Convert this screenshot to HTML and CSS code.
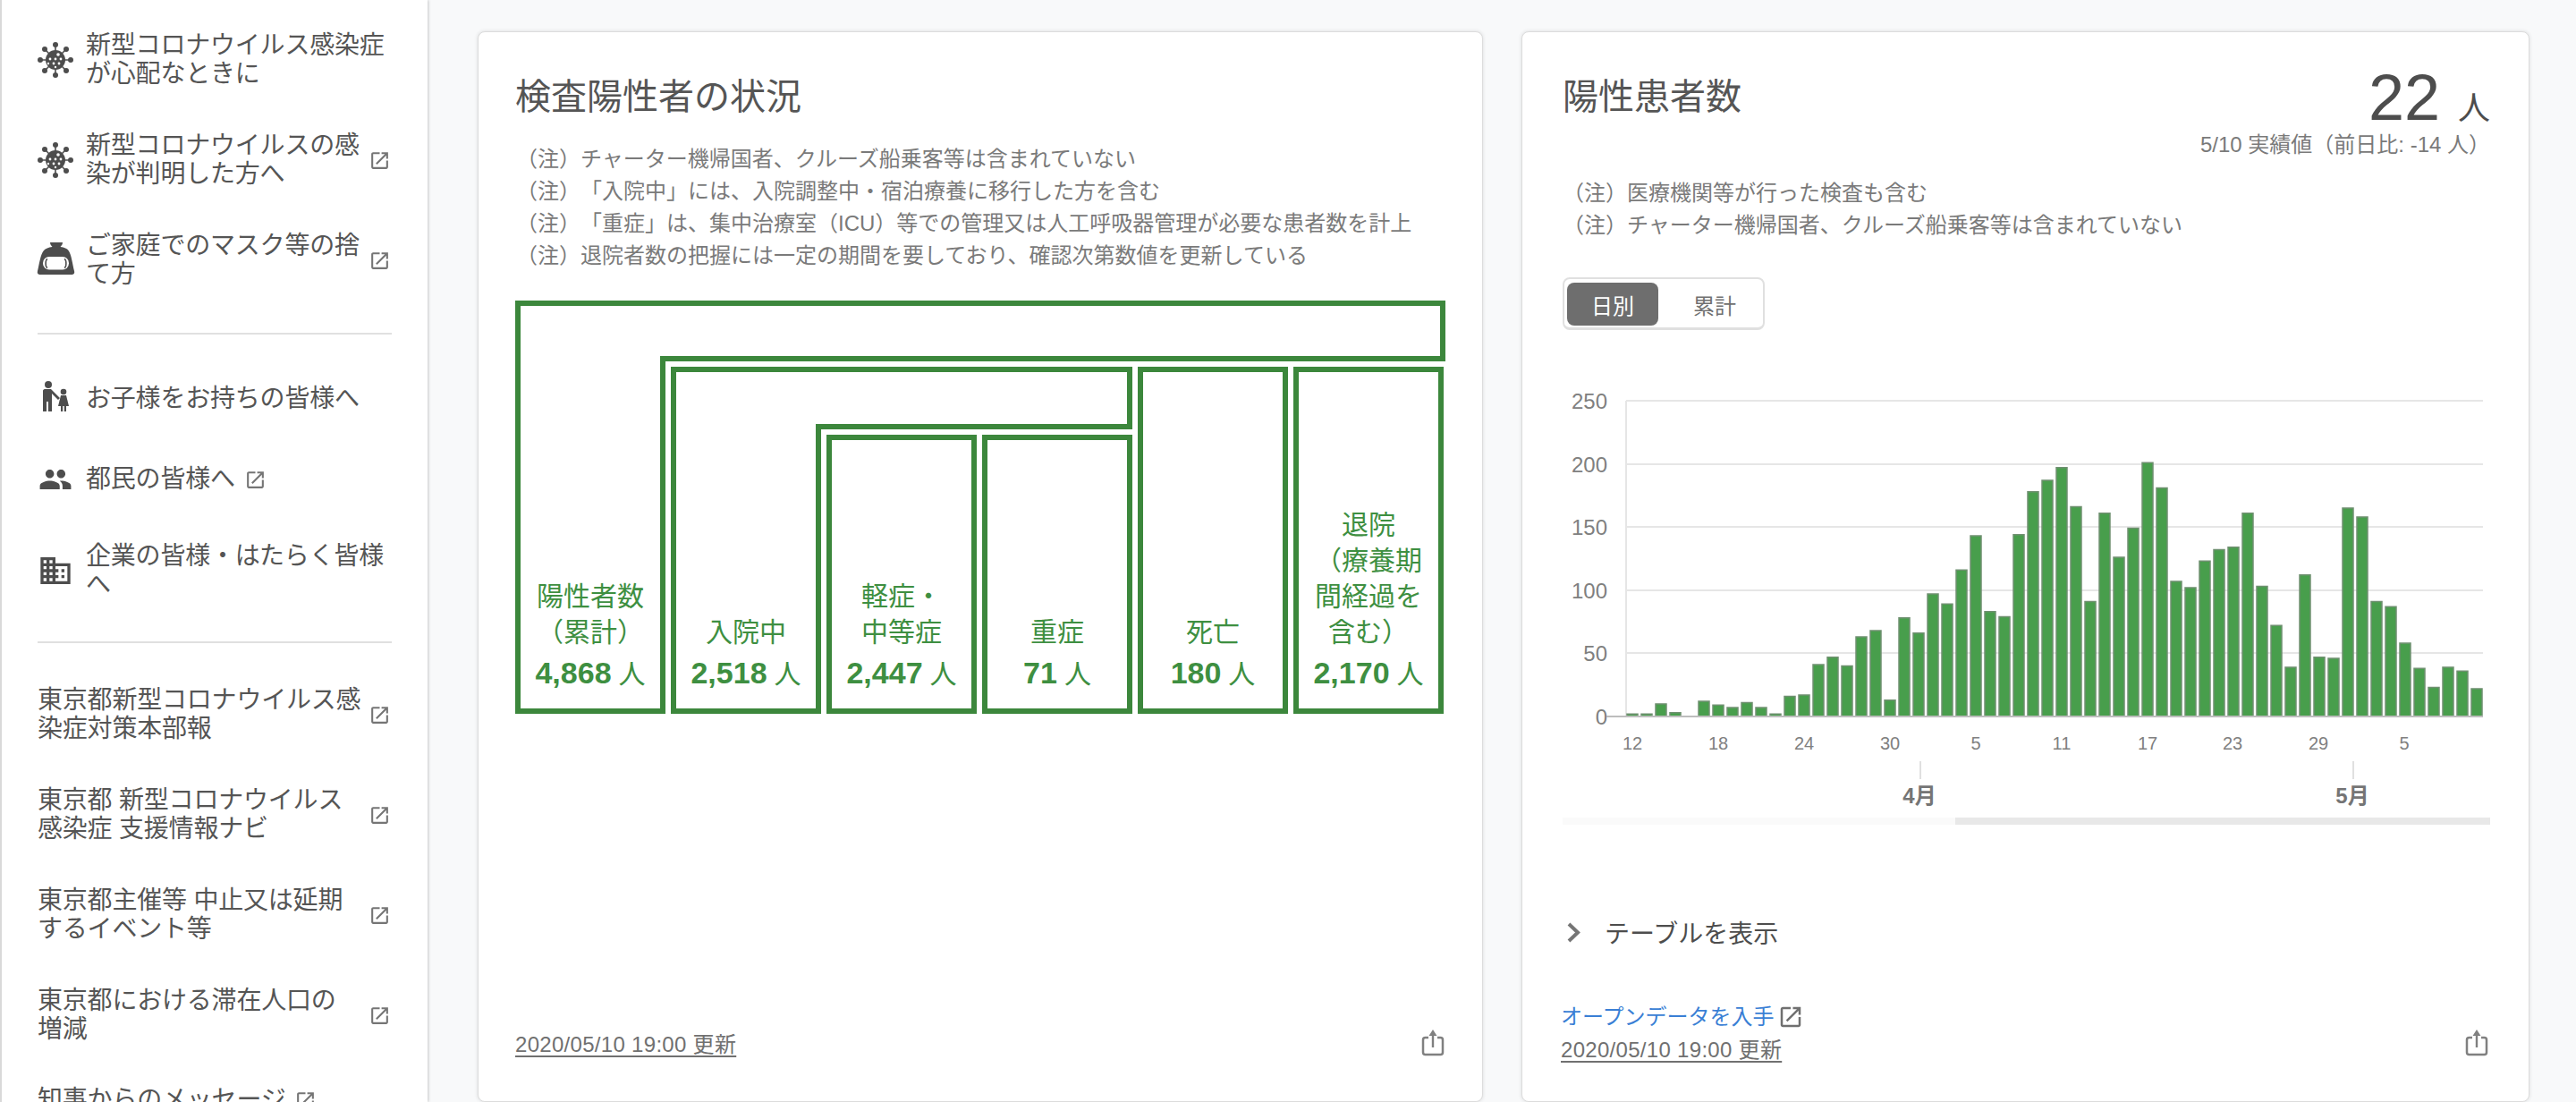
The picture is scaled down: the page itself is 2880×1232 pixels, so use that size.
FILE: index.html
```html
<!DOCTYPE html>
<html lang="ja">
<head>
    <meta charset="UTF-8">
    <title>東京都 新型コロナウイルス感染症 対策サイト</title>
    <link rel="stylesheet" href="styles.css">
</head>
<body>
    <svg class="icon-defs" width="0" height="0">
        <symbol id="icon-ext" viewBox="0 0 24 24">
            <path d="M19 19H5V5h7V3H5c-1.11 0-2 .9-2 2v14c0 1.1.89 2 2 2h14c1.1 0 2-.9 2-2v-7h-2v7zM14 3v2h3.59l-9.83 9.83 1.41 1.41L19 6.41V10h2V3h-7z"/>
        </symbol>
        <symbol id="icon-virus" viewBox="0 0 40 40">
            <path d="M20 3v34M3 20h34M8 8l24 24M32 8L8 32" fill="none" stroke="#4d4d4d" stroke-width="1.6"/>
            <circle cx="20" cy="20" r="11"/>
            <circle cx="20" cy="3" r="3"/><circle cx="20" cy="37" r="3"/>
            <circle cx="3" cy="20" r="3"/><circle cx="37" cy="20" r="3"/>
            <circle cx="8" cy="8" r="3"/><circle cx="32" cy="8" r="3"/>
            <circle cx="8" cy="32" r="3"/><circle cx="32" cy="32" r="3"/>
            <g fill="#fff">
                <circle cx="23" cy="14" r="1.8"/><circle cx="14" cy="19" r="1.4"/><circle cx="20" cy="19" r="1.4"/>
                <circle cx="26" cy="19" r="1.4"/><circle cx="12" cy="24" r="1.2"/><circle cx="18" cy="24" r="1.4"/>
                <circle cx="24" cy="24" r="1.4"/><circle cx="20" cy="28" r="1.2"/>
            </g>
        </symbol>
        <symbol id="icon-share" viewBox="0 0 26 30">
            <path d="M8 9H4.500Q2 9 2 11.500V25.500Q2 28 4.500 28H21.500Q24 28 24 25.500V11.500Q24 9 21.500 9H18" fill="none" stroke="#808080" stroke-width="2.500"/>
            <path d="M13 0l4.500 7H14.200V20H11.800V7H8.500z" fill="#808080"/>
        </symbol>
    </svg>

    <div class="layout">
        <nav class="sidebar">
            <a class="nav-item">
                <svg class="nav-icon"><use href="#icon-virus"/></svg>
                <span>新型コロナウイルス感染症<br>が心配なときに</span>
            </a>
            <a class="nav-item">
                <svg class="nav-icon"><use href="#icon-virus"/></svg>
                <span>新型コロナウイルスの感<br>染が判明した方へ</span>
                <svg class="ext"><use href="#icon-ext"/></svg>
            </a>
            <a class="nav-item">
                <svg class="nav-icon" viewBox="0 0 40 40">
                    <path d="M14 0H28C28 3 26 4 25.500 5C30 5.500 33 7 34.500 9C38 14 39 24 41 32C41.800 35 40 36 38 36H3C1 36-.8 35 0 32C2 24 3 14 7 9C9 7 12 5.500 16.500 5C16 4 14 3 14 0Z"/>
                    <rect x="6" y="16" width="29" height="14.500" rx="7" fill="#fff"/>
                    <path d="M11 18.500c-2.500 1-2.500 9 0 10" fill="none" stroke="#4d4d4d" stroke-width="1.600"/>
                    <path d="M30 18.500c2.500 1 2.500 9 0 10" fill="none" stroke="#4d4d4d" stroke-width="1.600"/>
                </svg>
                <span>ご家庭でのマスク等の捨<br>て方</span>
                <svg class="ext"><use href="#icon-ext"/></svg>
            </a>
            <hr class="nav-divider">
            <a class="nav-item nav-single">
                <svg class="nav-icon" viewBox="0 0 40 40">
                    <circle cx="12" cy="4" r="4"/>
                    <path d="M6 11c0-1 .8-2 2-2h7l10 10-2 2-7-7v20h-4V23h-2v11H6z"/>
                    <circle cx="29" cy="12" r="3.300"/>
                    <path d="M26 16h6l3 12h-3v6h-2.200v-6h-1.600v6H26v-6h-3z"/>
                </svg>
                <span>お子様をお持ちの皆様へ</span>
            </a>
            <a class="nav-item nav-single">
                <svg class="nav-icon nav-icon-people" viewBox="0 0 24 24">
                    <path d="M16 11c1.660 0 2.990-1.340 2.990-3S17.660 5 16 5c-1.660 0-3 1.340-3 3s1.340 3 3 3zm-8 0c1.660 0 2.990-1.340 2.990-3S9.660 5 8 5C6.340 5 5 6.340 5 8s1.340 3 3 3zm0 2c-2.330 0-7 1.170-7 3.500V19h14v-2.500c0-2.330-4.670-3.500-7-3.500zm8 0c-.29 0-.62.02-.97.05 1.160.84 1.970 1.970 1.970 3.450V19h6v-2.500c0-2.330-4.670-3.500-7-3.500z"/>
                </svg>
                <span>都民の皆様へ</span>
                <svg class="ext ext-inline"><use href="#icon-ext"/></svg>
            </a>
            <a class="nav-item nav-company">
                <svg class="nav-icon" viewBox="0 0 24 24">
                    <path d="M12 7V3H2v18h20V7H12zM6 19H4v-2h2v2zm0-4H4v-2h2v2zm0-4H4V9h2v2zm0-4H4V5h2v2zm4 12H8v-2h2v2zm0-4H8v-2h2v2zm0-4H8V9h2v2zm0-4H8V5h2v2zm10 12h-8v-2h2v-2h-2v-2h2v-2h-2V9h8v10zm-2-8h-2v2h2v-2zm0 4h-2v2h2v-2z"/>
                </svg>
                <span>企業の皆様・はたらく皆様<br>へ</span>
            </a>
            <hr class="nav-divider">
            <a class="nav-item">
                <span>東京都新型コロナウイルス感<br>染症対策本部報</span>
                <svg class="ext"><use href="#icon-ext"/></svg>
            </a>
            <a class="nav-item">
                <span>東京都 新型コロナウイルス<br>感染症 支援情報ナビ</span>
                <svg class="ext"><use href="#icon-ext"/></svg>
            </a>
            <a class="nav-item">
                <span>東京都主催等 中止又は延期<br>するイベント等</span>
                <svg class="ext"><use href="#icon-ext"/></svg>
            </a>
            <a class="nav-item">
                <span>東京都における滞在人口の<br>増減</span>
                <svg class="ext"><use href="#icon-ext"/></svg>
            </a>
            <a class="nav-item nav-last">
                <span>知事からのメッセージ</span>
                <svg class="ext ext-inline"><use href="#icon-ext"/></svg>
            </a>
        </nav>

        <main class="cards">
            <section class="card card-status">
                <h2 class="card-title">検査陽性者の状況</h2>
                <ul class="notes notes-status">
                    <li>（注）チャーター機帰国者、クルーズ船乗客等は含まれていない</li>
                    <li>（注）「入院中」には、入院調整中・宿泊療養に移行した方を含む</li>
                    <li>（注）「重症」は、集中治療室（ICU）等での管理又は人工呼吸器管理が必要な患者数を計上</li>
                    <li>（注）退院者数の把握には一定の期間を要しており、確認次第数値を更新している</li>
                </ul>
                <div class="flow">
                    <div class="box box-total">
                        <div class="box-text">
                            <span>陽性者数<br>（累計）</span>
                            <strong class="box-value">4,868<small>人</small></strong>
                        </div>
                    </div>
                    <div class="box box-hospital">
                        <div class="box-text">
                            <span>入院中</span>
                            <strong class="box-value">2,518<small>人</small></strong>
                        </div>
                    </div>
                    <div class="box box-mild">
                        <div class="box-text">
                            <span>軽症・<br>中等症</span>
                            <strong class="box-value">2,447<small>人</small></strong>
                        </div>
                    </div>
                    <div class="box box-severe">
                        <div class="box-text">
                            <span>重症</span>
                            <strong class="box-value">71<small>人</small></strong>
                        </div>
                    </div>
                    <div class="box box-death">
                        <div class="box-text">
                            <span>死亡</span>
                            <strong class="box-value">180<small>人</small></strong>
                        </div>
                    </div>
                    <div class="box box-discharged">
                        <div class="box-text">
                            <span>退院<br>（療養期<br>間経過を<br>含む）</span>
                            <strong class="box-value">2,170<small>人</small></strong>
                        </div>
                    </div>
                </div>
                <footer class="card-footer">
                    <div class="card-meta">
                        <time class="updated">2020/05/10 19:00 更新</time>
                    </div>
                    <svg class="share"><use href="#icon-share"/></svg>
                </footer>
            </section>

            <section class="card card-patients">
                <header class="card-header">
                    <h2 class="card-title">陽性患者数</h2>
                    <div class="stat">
                        <div class="stat-value">22<small>人</small></div>
                        <div class="stat-sub">5/10 実績値（前日比: -14 人）</div>
                    </div>
                </header>
                <ul class="notes notes-patients">
                    <li>（注）医療機関等が行った検査も含む</li>
                    <li>（注）チャーター機帰国者、クルーズ船乗客等は含まれていない</li>
                </ul>
                <div class="toggle">
                    <button class="toggle-btn toggle-active">日別</button>
                    <button class="toggle-btn">累計</button>
                </div>

                <svg class="chart" width="1037" height="490" viewBox="1747 420 1037 490">
                    <g class="grid-lines">
                        <path d="M1818 448H2776M1818 519H2776M1818 589H2776M1818 660H2776M1818 730H2776M1818 448V801"/>
                    </g>
                    <g class="y-labels">
                        <text x="1797" y="457">250</text>
                        <text x="1797" y="528">200</text>
                        <text x="1797" y="598">150</text>
                        <text x="1797" y="669">100</text>
                        <text x="1797" y="739">50</text>
                        <text x="1797" y="810">0</text>
                    </g>
                    <g class="bars" transform="translate(0 801) scale(1 -1.412)">
                        <rect x="1819" width="12" height="2"/><rect x="1835" width="12" height="2"/>
                        <rect x="1851" width="12" height="10"/><rect x="1867" width="12" height="3"/>
                        <rect x="1899" width="12" height="12"/>
                        <rect x="1915" width="12" height="9"/><rect x="1931" width="12" height="7"/>
                        <rect x="1947" width="12" height="11"/><rect x="1963" width="12" height="7"/>
                        <rect x="1979" width="12" height="2"/><rect x="1995" width="12" height="16"/>
                        <rect x="2011" width="12" height="17"/><rect x="2027" width="12" height="41"/>
                        <rect x="2043" width="12" height="47"/><rect x="2059" width="12" height="40"/>
                        <rect x="2075" width="12" height="63"/><rect x="2091" width="12" height="68"/>
                        <rect x="2107" width="12" height="13"/><rect x="2123" width="12" height="78"/>
                        <rect x="2139" width="12" height="66"/><rect x="2155" width="12" height="97"/>
                        <rect x="2171" width="12" height="89"/><rect x="2187" width="12" height="116"/>
                        <rect x="2203" width="12" height="143"/><rect x="2219" width="12" height="83"/>
                        <rect x="2235" width="12" height="79"/><rect x="2251" width="12" height="144"/>
                        <rect x="2267" width="12" height="178"/><rect x="2283" width="12" height="187"/>
                        <rect x="2299" width="12" height="197"/><rect x="2315" width="12" height="166"/>
                        <rect x="2331" width="12" height="91"/><rect x="2347" width="12" height="161"/>
                        <rect x="2363" width="12" height="126"/><rect x="2379" width="12" height="149"/>
                        <rect x="2395" width="12" height="201"/><rect x="2411" width="12" height="181"/>
                        <rect x="2427" width="12" height="107"/><rect x="2443" width="12" height="102"/>
                        <rect x="2459" width="12" height="123"/><rect x="2475" width="12" height="132"/>
                        <rect x="2491" width="12" height="134"/><rect x="2507" width="12" height="161"/>
                        <rect x="2523" width="12" height="103"/><rect x="2539" width="12" height="72"/>
                        <rect x="2555" width="12" height="39"/><rect x="2571" width="12" height="112"/>
                        <rect x="2587" width="12" height="47"/><rect x="2603" width="12" height="46"/>
                        <rect x="2619" width="12" height="165"/><rect x="2635" width="12" height="158"/>
                        <rect x="2651" width="12" height="91"/><rect x="2667" width="12" height="87"/>
                        <rect x="2683" width="12" height="58"/><rect x="2699" width="12" height="38"/>
                        <rect x="2715" width="12" height="23"/><rect x="2731" width="12" height="39"/>
                        <rect x="2747" width="12" height="36"/><rect x="2763" width="12" height="22"/>
                    </g>
                    <path class="zero-line" d="M1796 801H2776"/>
                    <g class="x-labels">
                        <text x="1825" y="838">12</text>
                        <text x="1921" y="838">18</text>
                        <text x="2017" y="838">24</text>
                        <text x="2113" y="838">30</text>
                        <text x="2209" y="838">5</text>
                        <text x="2305" y="838">11</text>
                        <text x="2401" y="838">17</text>
                        <text x="2496" y="838">23</text>
                        <text x="2592" y="838">29</text>
                        <text x="2688" y="838">5</text>
                    </g>
                    <path class="month-ticks" d="M2147 851V871M2631 851V871"/>
                    <g class="month-labels">
                        <text x="2146" y="898">4月</text>
                        <text x="2630" y="898">5月</text>
                    </g>
                </svg>
                <div class="scrollbar"><div class="scrollbar-thumb"></div></div>

                <div class="table-toggle">
                    <svg class="chevron" viewBox="0 0 17 23"><path d="M3 2l10 9.500L3 21"/></svg>
                    <span>テーブルを表示</span>
                </div>

                <footer class="card-footer">
                    <div class="card-meta">
                        <a class="open-data">オープンデータを入手<svg class="open-data-icon"><use href="#icon-ext"/></svg></a>
                        <time class="updated">2020/05/10 19:00 更新</time>
                    </div>
                    <svg class="share"><use href="#icon-share"/></svg>
                </footer>
            </section>
        </main>
    </div>
</body>
</html>
```

FILE: styles.css
```css
html, body {
    margin: 0;
    padding: 0;
    height: 1232px;
    overflow: hidden;
}
body {
    font-family: "Liberation Sans", "Noto Sans CJK JP", sans-serif;
    background-color: #f8f9fa;
    color: #4d4d4d;
    text-spacing-trim: space-all;
}
.icon-defs {
    position: absolute;
}
.layout {
    display: flex;
    height: 1232px;
}

/* sidebar */
.sidebar {
    box-sizing: border-box;
    width: 478px;
    height: 1232px;
    flex: none;
    padding: 11px 40px 0 40px;
    background: white;
    border-left: 2px solid #d9d9d9;
    box-shadow: 1px 0 3px rgba(0, 0, 0, 0.2);
    overflow: hidden;
}
.nav-item {
    display: flex;
    align-items: center;
    height: 112px;
    font-size: 28px;
    line-height: 32px;
    letter-spacing: -0.2px;
    color: #555;
    white-space: nowrap;
}
.nav-single {
    height: 90px;
}
.nav-company {
    margin-top: 1px;
}
.nav-last {
    height: 78px;
}
.nav-icon {
    width: 40px;
    height: 40px;
    flex: none;
    margin-right: 14px;
    fill: #4d4d4d;
    overflow: visible;
}
.nav-icon-people {
    width: 38px;
    height: 38px;
    margin-left: 1px;
    margin-right: 15px;
}
.ext {
    width: 25px;
    height: 25px;
    flex: none;
    margin-left: auto;
    margin-right: 1px;
    fill: #757575;
}
.ext-inline {
    margin-left: 10px;
    margin-right: 0;
}
.nav-divider {
    height: 2px;
    margin: 25px 0 27px;
    border: none;
    background: #e0e0e0;
}
.nav-company + .nav-divider {
    margin: 23px 0 24px;
}

/* cards */
.cards {
    flex: 1;
    display: flex;
    align-items: flex-start;
    padding: 35px 52px 0 56px;
    gap: 43px;
}
.card {
    box-sizing: border-box;
    display: flex;
    flex-direction: column;
    height: 1197px;
    padding-top: 48px;
    background: white;
    border: 1px solid #dcdcdc;
    border-radius: 8px;
    box-shadow: 0 0 4px rgba(0, 0, 0, 0.12);
}
.card-status {
    width: 1124px;
    padding-left: 41px;
    padding-right: 41px;
    padding-bottom: 45px;
}
.card-patients {
    width: 1127px;
    padding-left: 45px;
    padding-right: 43px;
    padding-bottom: 39px;
}
.card-header {
    display: flex;
    justify-content: space-between;
    align-items: flex-start;
}
.card-title {
    margin: 0;
    font-size: 40px;
    line-height: 48px;
    font-weight: normal;
    color: #555;
}
.notes {
    margin: 0;
    padding: 0 0 0 1px;
    list-style: none;
    font-size: 24px;
    line-height: 36px;
    color: #7a7a7a;
    white-space: nowrap;
}
.notes-status {
    margin-top: 28px;
}
.notes-patients {
    margin-top: 18px;
    padding-left: 0;
}

/* flow diagram */
.flow {
    display: grid;
    grid-template-columns: repeat(6, 168px);
    grid-template-rows: 68px 70px 312px;
    gap: 6px;
    margin-top: 32px;
    color: #3e8f41;
}
.box {
    position: relative;
    box-sizing: border-box;
    display: flex;
    align-items: flex-end;
    border: 6px solid #3c873c;
    background: white;
}
.box-total {
    grid-column: 1 / -1;
    grid-row: 1 / -1;
    width: 1040px;
}
.box-total::after, .box-hospital::after {
    content: "";
    position: absolute;
    left: 156px;
    right: -6px;
    bottom: -6px;
    background: white;
    border-top: 6px solid #3c873c;
    border-left: 6px solid #3c873c;
}
.box-total::after {
    top: 56px;
}
.box-hospital {
    grid-column: 2 / 5;
    grid-row: 2 / -1;
}
.box-hospital::after {
    top: 58px;
}
.box-mild {
    grid-column: 3;
    grid-row: 3;
}
.box-severe {
    grid-column: 4;
    grid-row: 3;
}
.box-death {
    grid-column: 5;
    grid-row: 2 / -1;
}
.box-discharged {
    grid-column: 6;
    grid-row: 2 / -1;
}
.box-text {
    display: flex;
    flex-direction: column;
    width: 156px;
    padding-bottom: 18px;
    font-size: 30px;
    line-height: 40px;
    text-align: center;
    white-space: nowrap;
}
.box-value {
    margin-top: 5px;
    font-size: 34px;
}
.box-value small {
    margin-left: 8px;
    font-size: 30px;
    font-weight: normal;
}

/* footer */
.card-footer {
    display: flex;
    justify-content: space-between;
    align-items: flex-end;
    margin-top: auto;
}
.card-meta {
    display: flex;
    flex-direction: column;
    font-size: 24px;
    line-height: 36px;
}
.card-patients .card-meta {
    margin-left: -2px;
}
.updated {
    color: #707070;
    letter-spacing: 0.3px;
    text-decoration: underline;
    text-decoration-thickness: 2px;
    text-underline-offset: 4px;
}
.open-data {
    display: flex;
    align-items: center;
    height: 36px;
    margin-bottom: 1px;
    color: #3a7fd5;
}
.open-data-icon {
    width: 30px;
    height: 30px;
    margin-left: 3px;
    fill: #707070;
}
.share {
    width: 26px;
    height: 30px;
    margin-right: 1px;
    margin-bottom: 5px;
}
.card-patients .share {
    margin-right: 2px;
    margin-bottom: 11px;
}

/* patients header */
.stat {
    text-align: right;
}
.stat-value {
    font-size: 72px;
    line-height: 50px;
    height: 50px;
    color: #4d4d4d;
}
.stat-value small {
    margin-left: 20px;
    font-size: 36px;
}
.stat-sub {
    margin-top: 10px;
    font-size: 24px;
    line-height: 36px;
    color: #7a7a7a;
}

/* toggle */
.toggle {
    display: flex;
    align-self: flex-start;
    box-sizing: border-box;
    width: 226px;
    height: 59px;
    margin-top: 40px;
    padding: 4px 3px;
    border: 2px solid #e0e0e0;
    border-bottom-width: 3px;
    border-radius: 8px;
}
.toggle-btn {
    width: 102px;
    height: 48px;
    padding: 0;
    border: none;
    border-radius: 8px;
    background: none;
    font: inherit;
    font-size: 24px;
    color: #707070;
}
.toggle-btn + .toggle-btn {
    width: 114px;
    padding-left: 12px;
}
.toggle-active {
    background-color: #6e6e6e;
    color: white;
}

/* chart */
.chart {
    display: block;
    flex: none;
    margin-top: 51px;
}
.grid-lines path {
    fill: none;
    stroke: #e6e6e6;
    stroke-width: 2;
}
.y-labels text {
    font-size: 24px;
    fill: #808080;
    text-anchor: end;
}
.x-labels text {
    font-size: 20px;
    fill: #808080;
    text-anchor: middle;
}
.bars rect {
    fill: #489e4c;
    stroke: #6f9070;
    stroke-width: 1.500;
    vector-effect: non-scaling-stroke;
}
.zero-line {
    fill: none;
    stroke: #bdbdbd;
    stroke-width: 2;
}
.month-ticks {
    fill: none;
    stroke: #e0e0e0;
    stroke-width: 2;
}
.month-labels text {
    font-size: 24px;
    font-weight: bold;
    fill: #757575;
    text-anchor: middle;
}
.scrollbar {
    flex: none;
    height: 8px;
    margin-top: 4px;
    background: #fafafa;
}
.scrollbar-thumb {
    height: 8px;
    margin-left: 439px;
    background: #e8e8e8;
}
.table-toggle {
    display: flex;
    align-items: center;
    height: 36px;
    margin-top: 102px;
    padding-left: 4px;
    font-size: 28px;
    color: #4d4d4d;
}
.chevron {
    width: 17px;
    height: 23px;
    margin-right: 26px;
    fill: none;
    stroke: #757575;
    stroke-width: 4;
}
```
